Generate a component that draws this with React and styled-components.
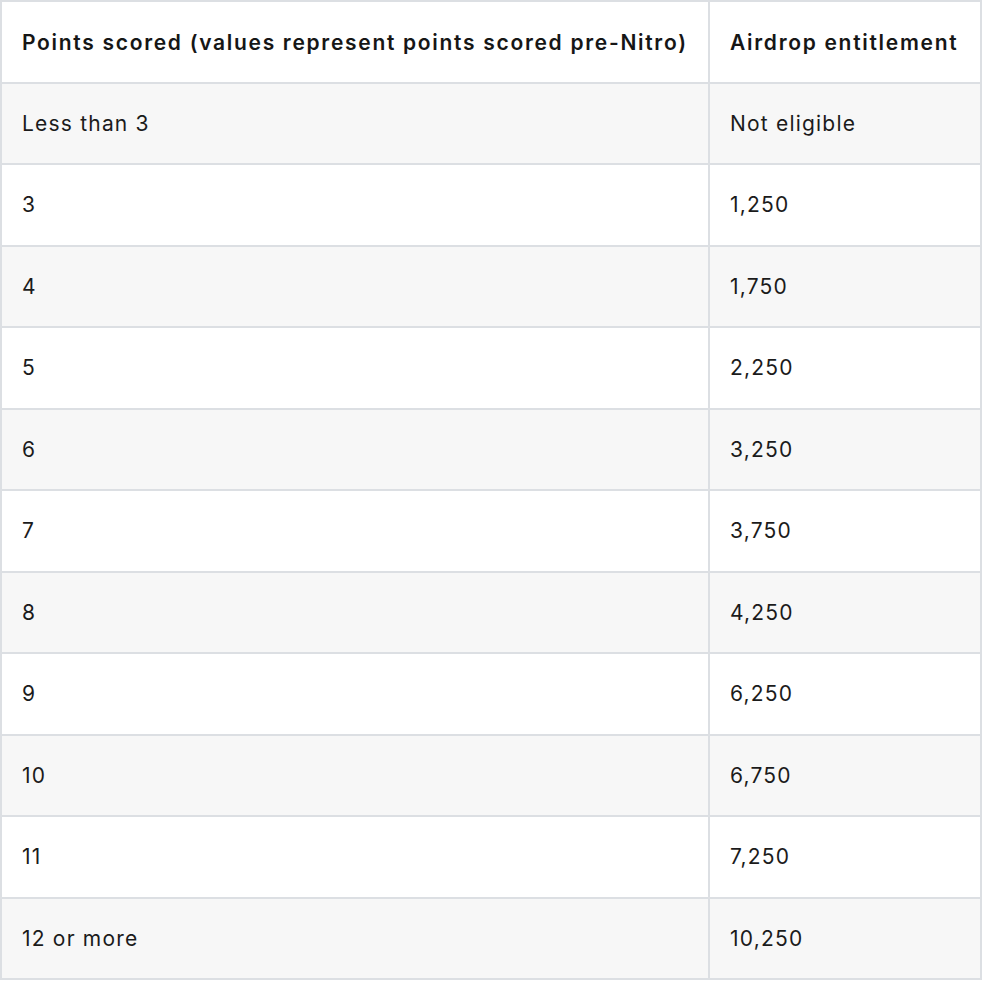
import React from "react";
import styled, { createGlobalStyle } from "styled-components";

const rows = [
  ["Less than 3", "Not eligible"],
  ["3", "1,250"],
  ["4", "1,750"],
  ["5", "2,250"],
  ["6", "3,250"],
  ["7", "3,750"],
  ["8", "4,250"],
  ["9", "6,250"],
  ["10", "6,750"],
  ["11", "7,250"],
  ["12 or more", "10,250"],
];

export default function App() {
  return (
    <>
      <GlobalStyle />
      <Table>
        <colgroup>
          <col style={{ width: 708 }} />
          <col />
        </colgroup>
        <thead>
          <tr>
            <Th>Points scored (values represent points scored pre-Nitro)</Th>
            <Th>Airdrop entitlement</Th>
          </tr>
        </thead>
        <tbody>
          {rows.map((row, index) => (
            <Row key={index} $striped={index % 2 === 0}>
              <Td>{row[0]}</Td>
              <Td>{row[1]}</Td>
            </Row>
          ))}
        </tbody>
      </Table>
    </>
  );
}

const GlobalStyle = createGlobalStyle`
  body {
    margin: 0;
    background: #ffffff;
    font-family: Inter, "Noto Sans", sans-serif;
    color: #1b1b1b;
  }
`;

const Table = styled.table`
  width: 982px;
  border-collapse: separate;
  border-spacing: 0;
  table-layout: fixed;
  border-top: 2px solid #dcdfe3;
  border-left: 2px solid #dcdfe3;
`;

const Th = styled.th`
  height: 81.5px;
  padding: 1px 20px 0;
  border-right: 2px solid #dcdfe3;
  border-bottom: 2px solid #dcdfe3;
  box-sizing: border-box;
  text-align: left;
  font-size: 21px;
  font-weight: 600;
  letter-spacing: 1.7px;
  color: #161616;
  background: #ffffff;
  white-space: nowrap;
`;

const Row = styled.tr`
  background: ${(p) => (p.$striped ? "#f7f7f7" : "#ffffff")};
`;

const Td = styled.td`
  height: 81.5px;
  padding: 0 20px;
  border-right: 2px solid #dcdfe3;
  border-bottom: 2px solid #dcdfe3;
  box-sizing: border-box;
  font-size: 21px;
  font-weight: 400;
  letter-spacing: 1.2px;
`;
